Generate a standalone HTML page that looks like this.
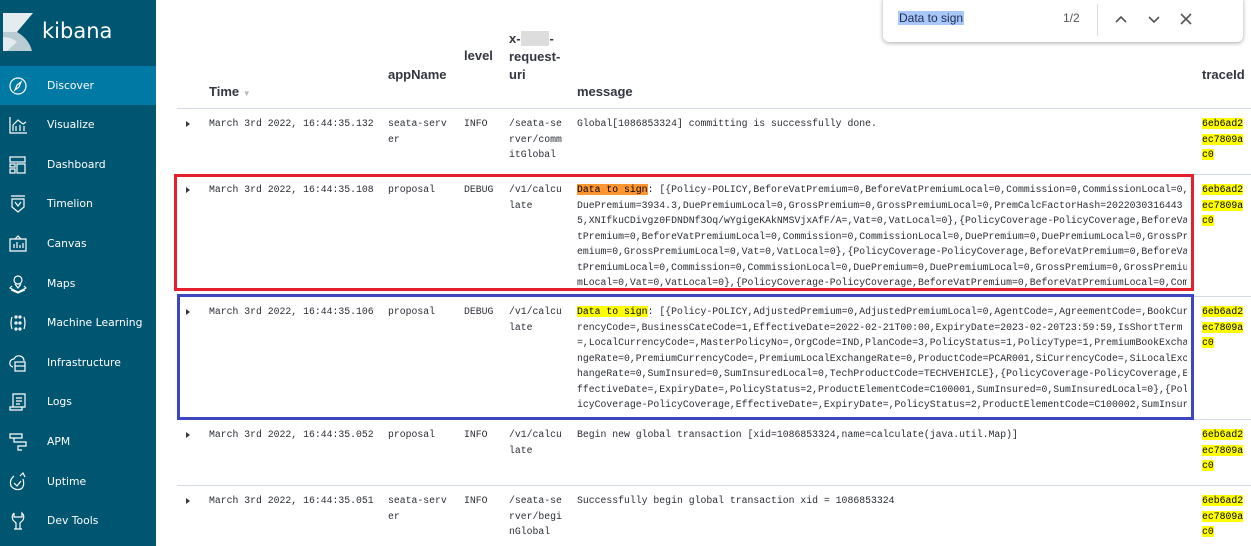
<!DOCTYPE html>
<html><head><meta charset="utf-8"><style>
*{margin:0;padding:0;box-sizing:border-box}
body{width:1251px;height:546px;overflow:hidden;background:#fff;position:relative;font-family:"Liberation Sans",sans-serif}
#side{position:absolute;left:0;top:0;width:156px;height:546px;background:#005571}
.logo{position:absolute;left:42px;top:19px;color:#fff;font-size:21px;font-family:"DejaVu Sans","Liberation Sans",sans-serif}
.nav{position:absolute;left:0;width:156px;height:39px;color:#fff;font-family:"DejaVu Sans",sans-serif}
.nav span{position:absolute;left:47px;top:13px;font-size:10.8px}
.nav svg{position:absolute;left:8px;top:10px}
.act{background:#0079a5}
.m{position:absolute;font-family:"Liberation Mono",monospace;font-size:9.8px;line-height:15.5px;color:#2a2d35;white-space:pre}
.h{position:absolute;font-weight:bold;font-size:13px;color:#343741;line-height:18px}
.sep{position:absolute;left:177px;width:1074px;height:1px;background:#d3dae6}
.arr{position:absolute;width:0;height:0;border-left:4px solid #343741;border-top:3px solid transparent;border-bottom:3px solid transparent}
.y{background:#ffff00;color:#000}
.o{background:#ff9632;color:#000}
</style></head><body>
<div id="side">
<svg style="position:absolute;left:3px;top:13px" width="30" height="38" viewBox="0 0 30 38">
<polygon points="0,0 30,0 14,19 0,19" fill="#e4ecef"/>
<path d="M0,19 L14,19 Q26,26 29,38 L0,38Z" fill="#b9ccd3"/>
<path d="M0,24 Q8,24 14,29 L4,38 L0,38Z" fill="#e4ecef"/>
</svg>
<div class="logo">kibana</div>
<div class="nav act" style="top:66px"><svg width="22" height="20" viewBox="0 0 22 20" fill="none" stroke="#fff" stroke-width="1.2"><circle cx="10" cy="10" r="8"/><path d="M13 6 L11 11 L7 14 L9 9Z"/></svg><span>Discover</span></div>
<div class="nav" style="top:105px"><svg width="22" height="20" viewBox="0 0 22 20" fill="none" stroke="#fff" stroke-width="1.2"><path d="M2 2V18H19M5 16V10L10 5L15 9L18 7M8 16V11M12 16V10M16 16V11"/></svg><span>Visualize</span></div>
<div class="nav" style="top:145px"><svg width="22" height="20" viewBox="0 0 22 20" fill="none" stroke="#fff" stroke-width="1.2"><rect x="2" y="2" width="15" height="5"/><rect x="2" y="9" width="5" height="3"/><rect x="2" y="14" width="5" height="4"/><rect x="9" y="9" width="8" height="9"/></svg><span>Dashboard</span></div>
<div class="nav" style="top:184px"><svg width="22" height="20" viewBox="0 0 22 20" fill="none" stroke="#fff" stroke-width="1.2"><path d="M3 2H17M4 5H16V13L10 18L4 13Z M7 8L10 12L13 8"/></svg><span>Timelion</span></div>
<div class="nav" style="top:224px"><svg width="22" height="20" viewBox="0 0 22 20" fill="none" stroke="#fff" stroke-width="1.2"><path d="M2 5H18V17H2Z M7 5L10 2L13 5 M6 14V10M9 14V8M12 14V11M15 14V9"/></svg><span>Canvas</span></div>
<div class="nav" style="top:264px"><svg width="22" height="20" viewBox="0 0 22 20" fill="none" stroke="#fff" stroke-width="1.2"><circle cx="10" cy="6" r="4"/><path d="M7 10L10 14L13 10 M4 12L2 14L10 18L18 14L16 12 M3 16L10 19L17 16"/></svg><span>Maps</span></div>
<div class="nav" style="top:303px"><svg width="22" height="20" viewBox="0 0 22 20" fill="none" stroke="#fff" stroke-width="1.2"><path d="M4 4Q2 10 4 16M16 4Q18 10 16 16"/><circle cx="8" cy="4" r="1"/><circle cx="12" cy="4" r="1"/><circle cx="8" cy="10" r="1"/><circle cx="12" cy="10" r="1"/><circle cx="8" cy="16" r="1"/><circle cx="12" cy="16" r="1"/></svg><span>Machine Learning</span></div>
<div class="nav" style="top:343px"><svg width="22" height="20" viewBox="0 0 22 20" fill="none" stroke="#fff" stroke-width="1.2"><path d="M5 14Q1 13 2 9Q3 6 6 6Q8 2 12 3Q16 4 16 8"/><rect x="7" y="9" width="10" height="9"/><path d="M7 13H17"/></svg><span>Infrastructure</span></div>
<div class="nav" style="top:382px"><svg width="22" height="20" viewBox="0 0 22 20" fill="none" stroke="#fff" stroke-width="1.2"><path d="M5 2H17V15H5Z M2 15H14V18H2Z M8 6H14M8 9H14M8 12H12"/></svg><span>Logs</span></div>
<div class="nav" style="top:422px"><svg width="22" height="20" viewBox="0 0 22 20" fill="none" stroke="#fff" stroke-width="1.2"><path d="M2 2H14V6H2Z M6 6V10H18V14H10V18H14"/></svg><span>APM</span></div>
<div class="nav" style="top:462px"><svg width="22" height="20" viewBox="0 0 22 20" fill="none" stroke="#fff" stroke-width="1.2"><path d="M6 4Q1 8 3 14Q7 19 13 17Q17 14 15 7 M12 4L15 1L17 5 M6 11L9 14L13 9"/></svg><span>Uptime</span></div>
<div class="nav" style="top:501px"><svg width="22" height="20" viewBox="0 0 22 20" fill="none" stroke="#fff" stroke-width="1.2"><path d="M6 2Q3 5 5 9Q7 11 8 12V18M12 18V12Q13 11 15 9Q17 5 14 2V6H6V2 M6 18H14"/></svg><span>Dev Tools</span></div>
</div>

<div style="position:absolute;left:883px;top:-4px;width:360px;height:46px;background:#fff;border-radius:6px;box-shadow:0 1px 4px rgba(0,0,0,.35)"></div>
<div style="position:absolute;left:898px;top:11px;font-size:12px;background:#a8c7fa;color:#1f2d4d;padding:0 1px">Data to sign</div>
<div style="position:absolute;left:1063px;top:11px;font-size:12px;color:#555">1/2</div>
<div style="position:absolute;left:1097px;top:4px;width:1px;height:32px;background:#ddd"></div>
<svg style="position:absolute;left:1112px;top:10px" width="90" height="18" viewBox="0 0 90 18" fill="none" stroke="#555" stroke-width="1.6"><path d="M4 12L9 7L14 12M37 7L42 12L47 7M69 4L79 14M79 4L69 14"/></svg>

<div class="h" style="left:209px;top:83px">Time <span style="font-size:8px;color:#bbb">▼</span></div>
<div class="h" style="left:388px;top:66px">appName</div>
<div class="h" style="left:464px;top:47px">level</div>
<div class="h" style="left:509px;top:30px">x-<span style="background:#ddd;color:#ddd">xxxx</span>-<br>request-<br>uri</div>
<div class="h" style="left:577px;top:83px">message</div>
<div class="h" style="left:1202px;top:66px">traceId</div>

<div class="sep" style="top:108px"></div>
<div class="sep" style="top:174px"></div>
<div class="sep" style="top:296px"></div>
<div class="sep" style="top:419px"></div>
<div class="sep" style="top:485px"></div>

<div class="arr" style="left:186px;top:121px"></div>
<div class="m" style="left:209px;top:116px">March 3rd 2022, 16:44:35.132</div>
<div class="m" style="left:388px;top:116px">seata-serv
er</div>
<div class="m" style="left:464px;top:116px">INFO</div>
<div class="m" style="left:509px;top:116px">/seata-se
rver/comm
itGlobal</div>
<div class="m" style="left:577px;top:116px">Global[1086853324] committing is successfully done.</div>
<div class="m" style="left:1202px;top:116px"><span class="y">6eb6ad2</span>
<span class="y">ec7809a</span>
<span class="y">c0</span></div>

<div class="arr" style="left:186px;top:187px"></div>
<div class="m" style="left:209px;top:182px">March 3rd 2022, 16:44:35.108</div>
<div class="m" style="left:388px;top:182px">proposal</div>
<div class="m" style="left:464px;top:182px">DEBUG</div>
<div class="m" style="left:509px;top:182px">/v1/calcu
late</div>
<div class="m" style="left:577px;top:182px;width:610px;height:105px;overflow:hidden"><span class="o">Data to sign</span>: [{Policy-POLICY,BeforeVatPremium=0,BeforeVatPremiumLocal=0,Commission=0,CommissionLocal=0,
DuePremium=3934.3,DuePremiumLocal=0,GrossPremium=0,GrossPremiumLocal=0,PremCalcFactorHash=2022030316443
5,XNIfkuCDivgz0FDNDNf3Oq/wYgigeKAkNMSVjxAfF/A=,Vat=0,VatLocal=0},{PolicyCoverage-PolicyCoverage,BeforeVa
tPremium=0,BeforeVatPremiumLocal=0,Commission=0,CommissionLocal=0,DuePremium=0,DuePremiumLocal=0,GrossPr
emium=0,GrossPremiumLocal=0,Vat=0,VatLocal=0},{PolicyCoverage-PolicyCoverage,BeforeVatPremium=0,BeforeVa
tPremiumLocal=0,Commission=0,CommissionLocal=0,DuePremium=0,DuePremiumLocal=0,GrossPremium=0,GrossPremiu
mLocal=0,Vat=0,VatLocal=0},{PolicyCoverage-PolicyCoverage,BeforeVatPremium=0,BeforeVatPremiumLocal=0,Com</div>
<div class="m" style="left:1202px;top:182px"><span class="y">6eb6ad2</span>
<span class="y">ec7809a</span>
<span class="y">c0</span></div>

<div class="arr" style="left:186px;top:309px"></div>
<div class="m" style="left:209px;top:304px">March 3rd 2022, 16:44:35.106</div>
<div class="m" style="left:388px;top:304px">proposal</div>
<div class="m" style="left:464px;top:304px">DEBUG</div>
<div class="m" style="left:509px;top:304px">/v1/calcu
late</div>
<div class="m" style="left:577px;top:304px;width:610px;height:110px;overflow:hidden"><span class="y">Data to sign</span>: [{Policy-POLICY,AdjustedPremium=0,AdjustedPremiumLocal=0,AgentCode=,AgreementCode=,BookCur
rencyCode=,BusinessCateCode=1,EffectiveDate=2022-02-21T00:00,ExpiryDate=2023-02-20T23:59:59,IsShortTerm
=,LocalCurrencyCode=,MasterPolicyNo=,OrgCode=IND,PlanCode=3,PolicyStatus=1,PolicyType=1,PremiumBookExcha
ngeRate=0,PremiumCurrencyCode=,PremiumLocalExchangeRate=0,ProductCode=PCAR001,SiCurrencyCode=,SiLocalExc
hangeRate=0,SumInsured=0,SumInsuredLocal=0,TechProductCode=TECHVEHICLE},{PolicyCoverage-PolicyCoverage,E
ffectiveDate=,ExpiryDate=,PolicyStatus=2,ProductElementCode=C100001,SumInsured=0,SumInsuredLocal=0},{Pol
icyCoverage-PolicyCoverage,EffectiveDate=,ExpiryDate=,PolicyStatus=2,ProductElementCode=C100002,SumInsur</div>
<div class="m" style="left:1202px;top:304px"><span class="y">6eb6ad2</span>
<span class="y">ec7809a</span>
<span class="y">c0</span></div>

<div class="arr" style="left:186px;top:432px"></div>
<div class="m" style="left:209px;top:427px">March 3rd 2022, 16:44:35.052</div>
<div class="m" style="left:388px;top:427px">proposal</div>
<div class="m" style="left:464px;top:427px">INFO</div>
<div class="m" style="left:509px;top:427px">/v1/calcu
late</div>
<div class="m" style="left:577px;top:427px">Begin new global transaction [xid=1086853324,name=calculate(java.util.Map)]</div>
<div class="m" style="left:1202px;top:427px"><span class="y">6eb6ad2</span>
<span class="y">ec7809a</span>
<span class="y">c0</span></div>

<div class="arr" style="left:186px;top:498px"></div>
<div class="m" style="left:209px;top:493px">March 3rd 2022, 16:44:35.051</div>
<div class="m" style="left:388px;top:493px">seata-serv
er</div>
<div class="m" style="left:464px;top:493px">INFO</div>
<div class="m" style="left:509px;top:493px">/seata-se
rver/begi
nGlobal</div>
<div class="m" style="left:577px;top:493px">Successfully begin global transaction xid = 1086853324</div>
<div class="m" style="left:1202px;top:493px"><span class="y">6eb6ad2</span>
<span class="y">ec7809a</span>
<span class="y">c0</span></div>

<div style="position:absolute;left:174px;top:174px;width:1020px;height:117px;border:3px solid #e3202b"></div>
<div style="position:absolute;left:177px;top:294px;width:1017px;height:126px;border:3px solid #3c46c0"></div>
</body></html>
